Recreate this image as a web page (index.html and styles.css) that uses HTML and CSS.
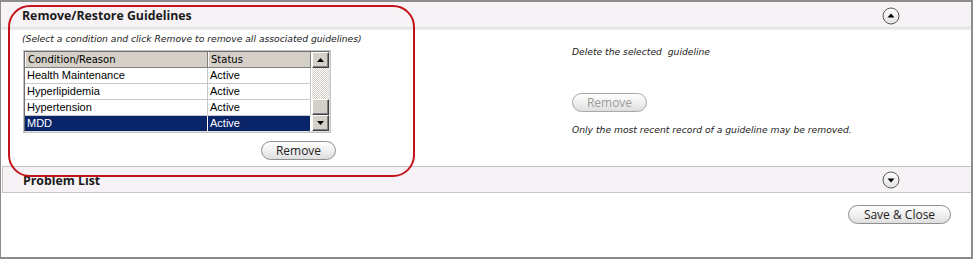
FILE: index.html
```html
<!DOCTYPE html>
<html>
<head>
<meta charset="utf-8">
<link rel="stylesheet" href="styles.css">
</head>
<body>
<div class="frame">
  <div class="panel-head open">
    <h2 class="panel-title">Remove/Restore Guidelines</h2>
    <button class="toggle" aria-label="Collapse">
      <svg width="18" height="18" viewBox="0 0 18 18"><defs><linearGradient id="g1" x1="0" y1="0" x2="0" y2="1"><stop offset="0" stop-color="#ffffff"/><stop offset="1" stop-color="#e2e2e2"/></linearGradient></defs><circle cx="9" cy="9" r="8" fill="url(#g1)" stroke="#5a5a5a" stroke-width="1"/><path d="M5.5 10.5 L9 6.5 L12.5 10.5 Z" fill="#000"/></svg>
    </button>
  </div>
  <div class="panel-body">
    <div class="col-left">
      <p class="hint">(Select a condition and click Remove to remove all associated guidelines)</p>
      <div class="grid">
        <div class="grid-inner">
          <div class="grid-table">
            <div class="row head"><div class="cell c1">Condition/Reason</div><div class="cell c2">Status</div></div>
            <div class="row"><div class="cell c1">Health Maintenance</div><div class="cell c2">Active</div></div>
            <div class="row"><div class="cell c1">Hyperlipidemia</div><div class="cell c2">Active</div></div>
            <div class="row"><div class="cell c1">Hypertension</div><div class="cell c2">Active</div></div>
            <div class="row selected"><div class="cell c1">MDD</div><div class="cell c2">Active</div></div>
          </div>
          <div class="scrollbar">
            <div class="sb-btn"><svg width="7" height="4" viewBox="0 0 7 4"><path d="M0 4 L3.5 0 L7 4 Z" fill="#000"/></svg></div>
            <div class="sb-track"></div>
            <div class="sb-thumb"></div>
            <div class="sb-btn"><svg width="7" height="4" viewBox="0 0 7 4"><path d="M0 0 L3.5 4 L7 0 Z" fill="#000"/></svg></div>
          </div>
        </div>
      </div>
      <div class="left-actions"><button class="pill">Remove</button></div>
    </div>
    <div class="col-right">
      <p class="note first">Delete the selected&nbsp; guideline</p>
      <button class="pill disabled" disabled>Remove</button>
      <p class="note">Only the most recent record of a guideline may be removed.</p>
    </div>
  </div>
  <div class="panel-head closed">
    <h2 class="panel-title">Problem List</h2>
    <button class="toggle" aria-label="Expand">
      <svg width="18" height="18" viewBox="0 0 18 18"><defs><linearGradient id="g2" x1="0" y1="0" x2="0" y2="1"><stop offset="0" stop-color="#ffffff"/><stop offset="1" stop-color="#e2e2e2"/></linearGradient></defs><circle cx="9" cy="9" r="8" fill="url(#g2)" stroke="#5a5a5a" stroke-width="1"/><path d="M5.5 7.5 L9 11.5 L12.5 7.5 Z" fill="#000"/></svg>
    </button>
  </div>
  <div class="footer"><button class="pill save">Save &amp; Close</button></div>
  <div class="callout"></div>
</div>
</body>
</html>
```
FILE: styles.css
```css
html, body { margin: 0; padding: 0; background: #fff; }
.frame {
  position: relative;
  width: 973px;
  height: 259px;
  box-sizing: border-box;
  border: 2px solid #8c8c8c;
  border-left-width: 1px;
  background: #fff;
  font-family: "Liberation Sans", Arial, sans-serif;
  color: #000;
  overflow: hidden;
}
.panel-head {
  display: flex;
  align-items: center;
  justify-content: space-between;
  box-sizing: border-box;
  padding: 0 71px 0 21px;
  background: #f6f2f6;
}
.panel-head.open {
  height: 29px;
  padding-bottom: 2px;
  background: linear-gradient(#f6f2f6 0, #f6f2f6 25px, #dcdcdc 25px, #f4f4f4 28px, #ffffff 29px);
}
.panel-head.closed {
  height: 27px;
  margin: 2px 0 0 1px;
  border-top: 1px solid #c4c4c4;
  border-bottom: 1px solid #c4c4c4;
  border-left: 1px solid #c4c4c4;
  padding-left: 20px;
  padding-top: 1px;
}
.panel-title {
  margin: 0;
  font-family: "Open Sans", "Liberation Sans", sans-serif;
  font-weight: 700;
  font-size: 12.3px;
  color: #1a1a1a;
}
.toggle {
  border: 0;
  padding: 0;
  margin: 0;
  background: none;
  width: 18px;
  height: 18px;
  display: block;
}
.toggle svg { display: block; }
.panel-body {
  display: flex;
  padding-left: 21px;
  height: 133px;
}
.col-left { width: 550px; }
.hint, .note {
  margin: 0;
  font-family: "DejaVu Sans", sans-serif;
  font-style: italic;
  font-size: 9.2px;
  line-height: 12px;
  color: #1a1a1a;
  white-space: nowrap;
}
.hint { margin-top: 2px; }
.grid {
  margin-top: 5px;
  margin-left: 1px;
  width: 308px;
  box-sizing: border-box;
  border: 1px solid #c4c4c4;
}
.grid-inner {
  display: flex;
  border: 1px solid #6f6f6f;
  border-right-color: #e0e0e0;
  border-bottom-color: #e0e0e0;
  font-size: 11px;
}
.grid-table { flex: 1; }
.row {
  display: flex;
  height: 16px;
  box-sizing: border-box;
  border-bottom: 1px solid #c8c8c8;
  background: #fff;
}
.row:last-child { border-bottom: 0; height: 15px; }
.cell {
  box-sizing: border-box;
  padding-left: 2px;
  line-height: 15px;
  white-space: nowrap;
  overflow: hidden;
}
.c1 { width: 183px; border-right: 1px solid #c8c8c8; }
.c2 { flex: 1; border-right: 1px solid #c8c8c8; }
.row.head { background: #d4d0c8; border-bottom: 1px solid #808080; }
.row.head .cell {
  font-family: "DejaVu Sans", sans-serif;
  font-size: 10px;
  border-left: 1px solid #fff;
  border-right: 1px solid #808080;
}
.row.selected { background: #0a246a; color: #fff; }
.row.selected .cell { border-right-color: #fff; }
.scrollbar {
  width: 17px;
  display: flex;
  flex-direction: column;
  border-left: 1px solid #fff;
}
.sb-btn, .sb-thumb {
  height: 16px;
  box-sizing: border-box;
  background: #d4d0c8;
  border: 1px solid;
  border-color: #fff #404040 #404040 #fff;
  box-shadow: inset -1px -1px #808080;
  display: flex;
  align-items: center;
  justify-content: center;
}
.sb-btn svg { display: block; }
.sb-track {
  flex: 1;
  background-color: #fff;
  background-image: repeating-conic-gradient(#d4d0c8 0 25%, #fff 0 50%);
  background-size: 2px 2px;
}
.left-actions {
  display: flex;
  justify-content: flex-end;
  width: 314px;
  margin-top: 8px;
}
.pill {
  height: 19px;
  box-sizing: border-box;
  border: 1px solid #8f8f8f;
  border-radius: 10px;
  background: linear-gradient(#fefefe, #f2f2f2 45%, #dedede);
  font-family: "Open Sans", "Liberation Sans", sans-serif;
  font-size: 12px;
  line-height: 16px;
  color: #222;
  padding: 0 13px;
  margin: 0;
}
.left-actions .pill { width: 75px; padding: 0; }
.pill.disabled { width: 75px; padding: 0; color: #9a9a9a; border-color: #a8a8a8; }
.col-right { padding-top: 15px; }
.col-right .pill { display: block; margin-top: 35px; }
.col-right .note + .pill + .note { margin-top: 12px; }
.footer {
  display: flex;
  justify-content: flex-end;
  padding: 12px 20px 0 0;
}
.pill.save { width: 103px; padding: 0; }
.callout {
  position: absolute;
  left: 7px;
  top: 3px;
  width: 407px;
  height: 172px;
  box-sizing: border-box;
  border: 2px solid #c4121b;
  border-radius: 22px;
  pointer-events: none;
}
```
